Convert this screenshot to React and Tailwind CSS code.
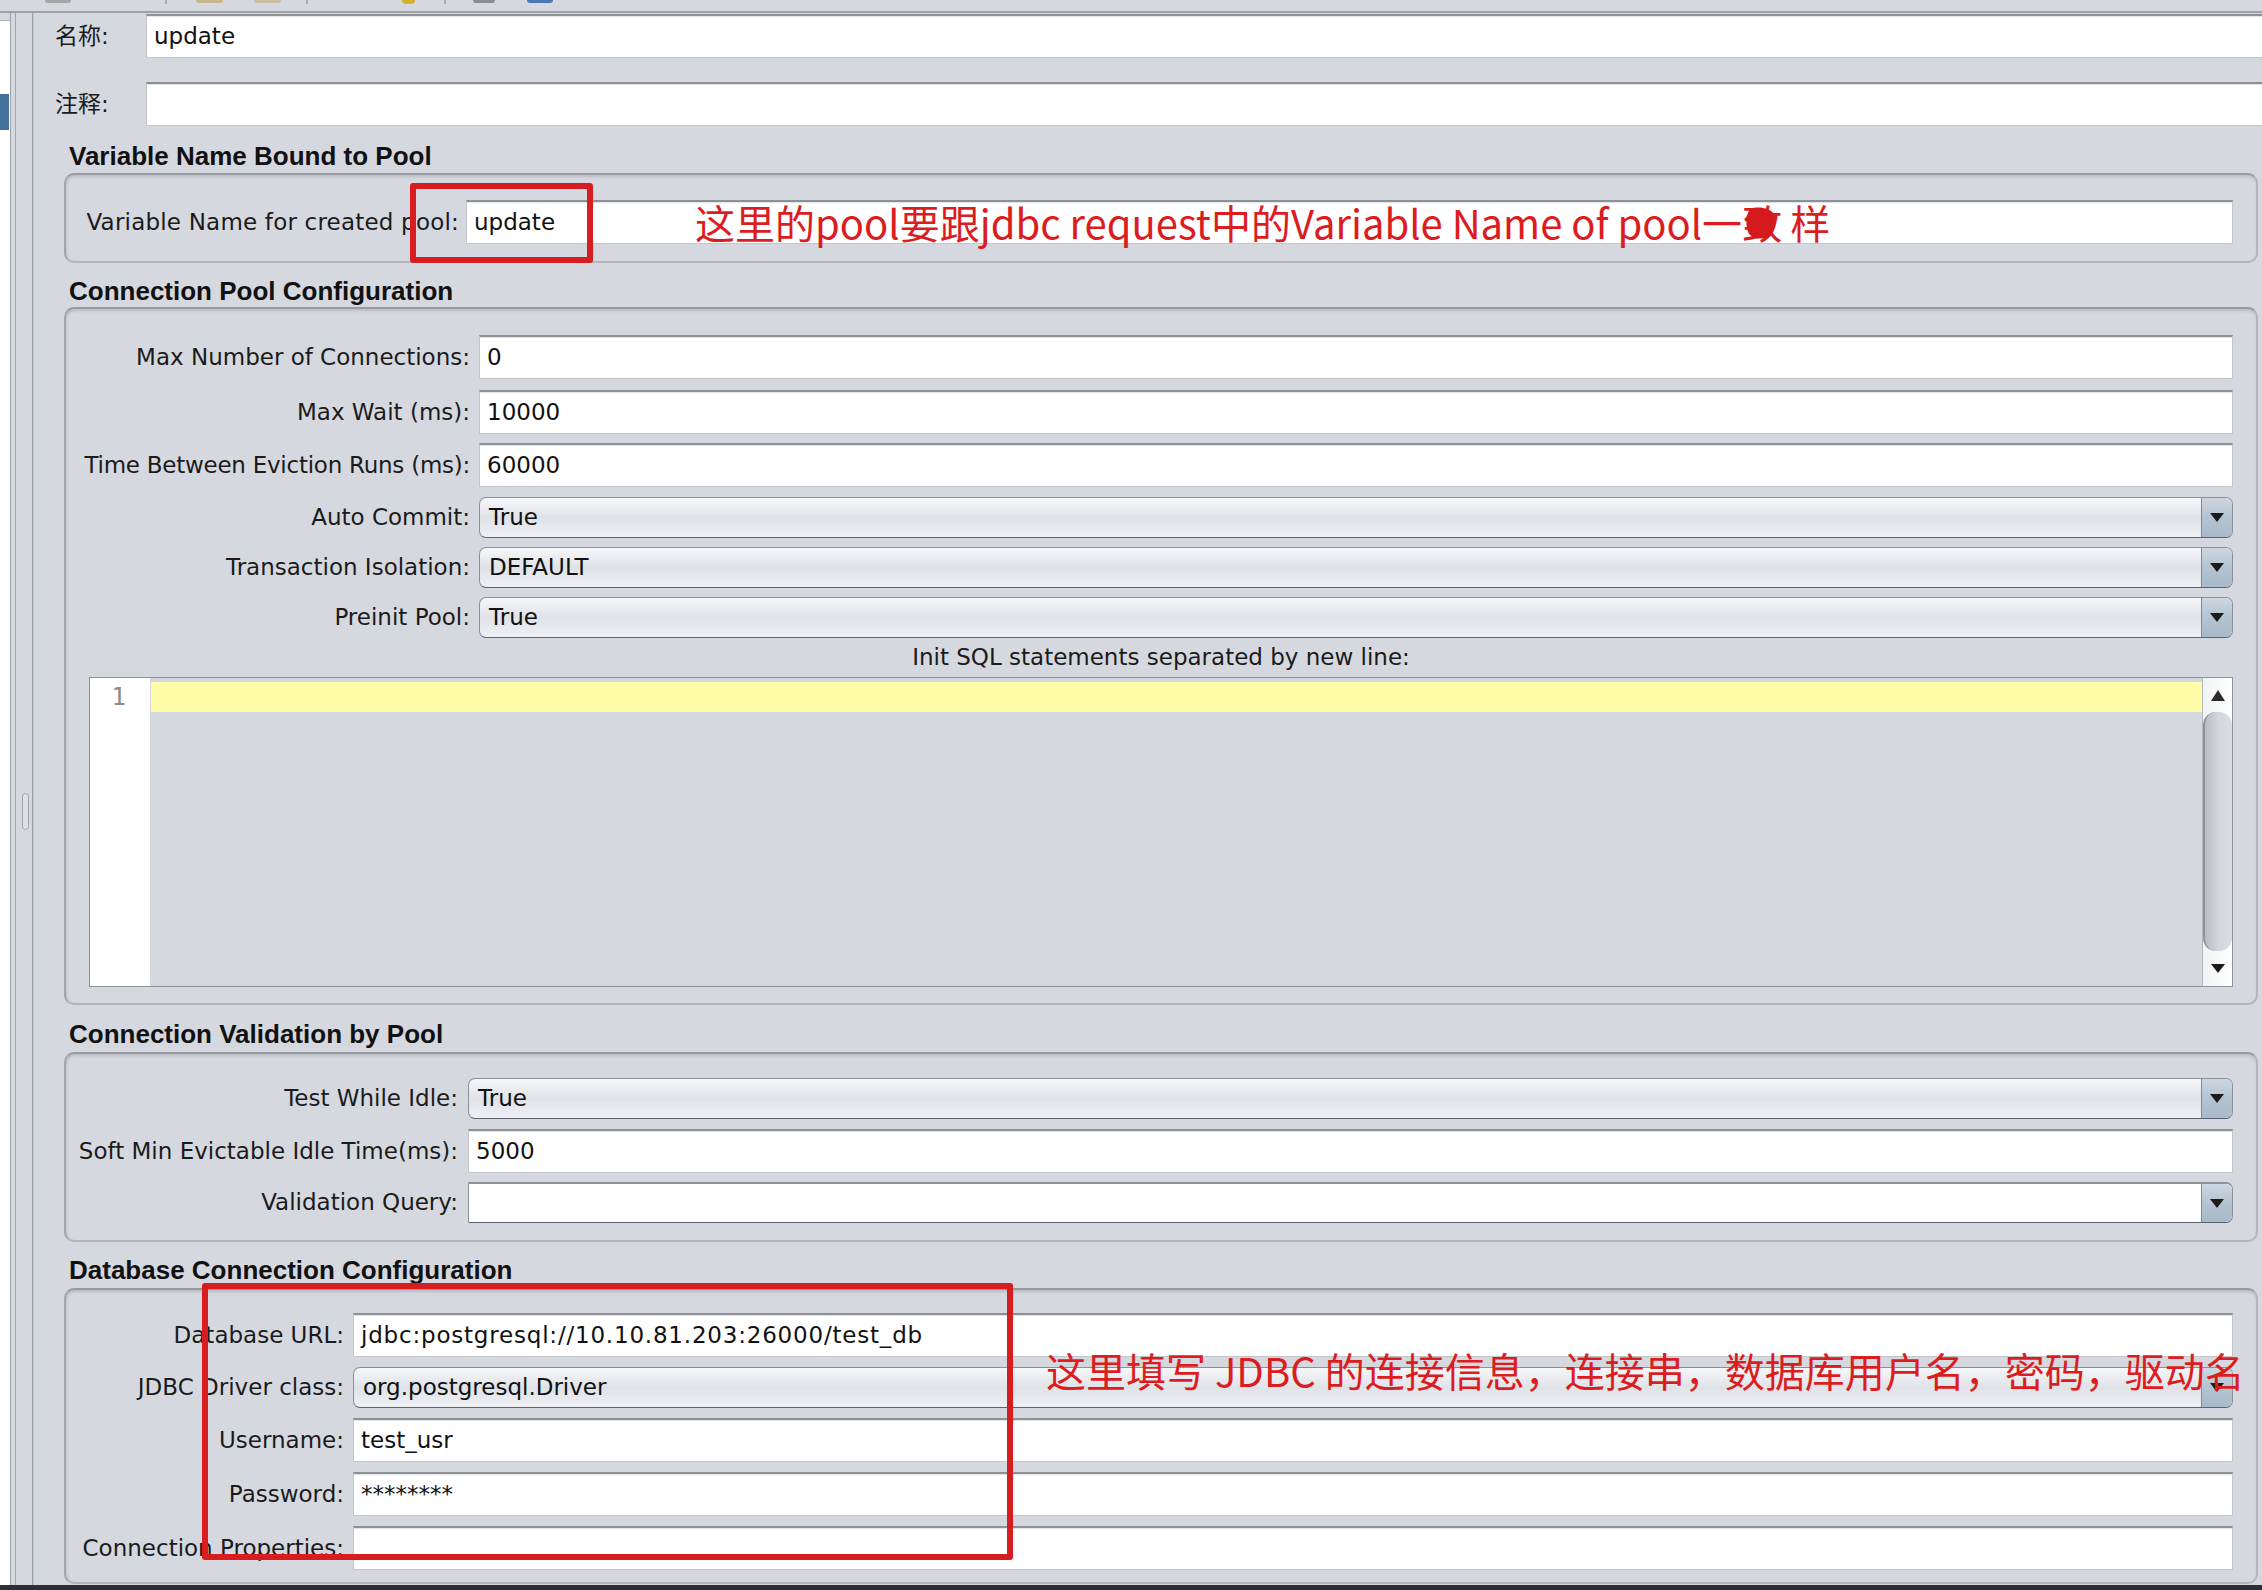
import React from 'react';

const SANS = "font-['DejaVu_Sans','Noto_Sans_CJK_SC',sans-serif]";
const BOLD = "font-['Liberation_Sans','Noto_Sans_CJK_SC',sans-serif]";
const CJK = "font-['Noto_Sans_CJK_SC','Liberation_Sans',sans-serif]";

const DownArrow = () => (
  <svg width="14" height="9" viewBox="0 0 14 9">
    <path d="M0 0h14L7 9z" fill="#1b1b1b" />
  </svg>
);

const UpArrow = () => (
  <svg width="14" height="11" viewBox="0 0 14 11">
    <path d="M7 0l7 11H0z" fill="#2b2b2b" />
  </svg>
);

// white text field with the etched top edge
const TextField = ({ value = '', className = '' }) => (
  <div
    className={`h-[44px] flex-1 min-w-0 bg-white border border-[#c3c5c9] border-t-2 border-t-[#8d9095] shadow-[inset_0_1px_0_#e3e4e6] flex items-center pl-[7px] text-[23px] text-[#111] whitespace-nowrap overflow-hidden ${className}`}
  >
    {value}
  </div>
);

// combo box, either the grey button style or the editable white one
const Combo = ({ value = '', editable = false }) => (
  <div
    className={`h-[41px] flex-1 min-w-0 flex overflow-hidden border border-[#8b8f97] border-b-[#5c6270] ${
      editable
        ? 'rounded-r-[7px] bg-white border-t-2 border-t-[#8d9095]'
        : 'rounded-[7px] bg-linear-to-b from-[#f6f7f9] via-[#dfe2e7] to-[#eef0f4]'
    }`}
  >
    <div className="flex-1 flex items-center pl-[9px] text-[23px] text-[#111] whitespace-nowrap">{value}</div>
    <div className="w-[31px] shrink-0 border-l border-[#7e8a99] bg-linear-to-b from-[#cdd7e1] via-[#b4c3d1] to-[#a8b9ca] flex items-center justify-center">
      <DownArrow />
    </div>
  </div>
);

const Row = ({ label, labelClass, className = '', children }) => (
  <div className={`flex items-center ${className}`}>
    <div className={`shrink-0 text-right text-[23px] text-[#1b1b1b] whitespace-nowrap ${labelClass}`}>{label}</div>
    {children}
  </div>
);

const Heading = ({ children, className = '' }) => (
  <div className={`ml-[35px] h-[30px] leading-[30px] text-[26px] font-bold text-[#111] ${BOLD} ${className}`}>{children}</div>
);

const GroupBox = ({ children, className = '' }) => (
  <div
    className={`ml-[30px] mr-[4px] rounded-[10px] border-2 border-[#b2b5bc] border-t-[#979aa1] border-l-[#a2a5ac] shadow-[inset_0_3px_3px_-1px_rgba(0,0,0,0.13),inset_3px_0_3px_-2px_rgba(0,0,0,0.09)] pr-[23px] ${className}`}
  >
    {children}
  </div>
);

const SqlEditor = () => (
  <div className="ml-[23px] h-[310px] border border-[#8e9196] flex">
    <div className="w-[61px] shrink-0 bg-white border-r border-[#d4d6da] flex justify-end pr-[24px] pt-[4px]">
      <span className="h-[30px] leading-[30px] text-[24px] text-[#8a8a8a] font-['DejaVu_Sans_Mono',monospace]">1</span>
    </div>
    <div className="flex-1 min-w-0 pt-[4px]">
      <div className="h-[30px] bg-[#fffca9]" />
    </div>
    <div className="w-[30px] shrink-0 flex flex-col border-l border-[#b4b7bc] bg-linear-to-r from-[#f2f3f5] to-[#ffffff]">
      <div className="h-[34px] flex items-center justify-center">
        <UpArrow />
      </div>
      <div className="flex-1 rounded-[13px] border-l-2 border-[#8f9298] bg-linear-to-r from-[#b9bcc2] via-[#d3d6db] to-[#dadde2]" />
      <div className="h-[35px] flex items-center justify-center">
        <DownArrow />
      </div>
    </div>
  </div>
);

const LeftStrip = () => (
  <div className="w-[34px] shrink-0 flex">
    <div className="w-[11px] border-r border-[#9ea2a8] flex flex-col pt-[7px]">
      <div className="flex-1 bg-white border-t border-[#b0b4ba]">
        <div className="mt-[73px] w-[9px] h-[36px] bg-[#45739e]" />
      </div>
    </div>
    <div className="w-[4px]" />
    <div className="w-[1px] bg-[#a3a7ad]" />
    <div className="w-[16px] pl-[6px]">
      <div className="mt-[780px] w-[7px] h-[37px] rounded-full border border-[#9fa3a9] bg-[#dde0e5]" />
    </div>
    <div className="w-[2px] border-l border-[#9a9ea5] bg-[#c9ccd2]" />
  </div>
);

const Toolbar = () => (
  <div className="h-[13px] shrink-0 border-b-2 border-[#9da1a7] flex items-start">
    <div className="ml-[45px] w-[26px] h-[3px] rounded-b bg-[#a5a5a5]" />
    <div className="ml-[94px] w-[2px] h-[4px] bg-[#a9a9a9]" />
    <div className="ml-[29px] w-[27px] h-[3px] rounded-b bg-[#c6b78e]" />
    <div className="ml-[31px] w-[27px] h-[3px] rounded-b bg-[#cbbfa2]" />
    <div className="ml-[25px] w-[2px] h-[4px] bg-[#a9a9a9]" />
    <div className="ml-[94px] w-[13px] h-[4px] rounded-b bg-[#d6b02e]" />
    <div className="ml-[29px] w-[2px] h-[4px] bg-[#a9a9a9]" />
    <div className="ml-[27px] w-[22px] h-[3px] rounded-b bg-[#8a8d92]" />
    <div className="ml-[32px] w-[26px] h-[3px] rounded-b bg-[#4e77b4]" />
  </div>
);

const App = () => {
  return (
    <div className={`relative w-[2262px] h-[1590px] overflow-hidden bg-[#d5d8df] flex flex-col ${SANS}`}>
      <Toolbar />

      <div className="flex-1 flex min-h-0">
        <LeftStrip />

        <div className="flex-1 min-w-0 flex flex-col overflow-hidden">
          {/* name / comment */}
          <Row label="名称:" labelClass="w-[112px] !text-left pl-[21px]" className="mt-[1px] -mr-[8px]">
            <TextField value="update" />
          </Row>
          <Row label="注释:" labelClass="w-[112px] !text-left pl-[21px]" className="mt-[24px] -mr-[8px]">
            <TextField />
          </Row>

          {/* Variable Name Bound to Pool */}
          <Heading className="mt-[15px]">Variable Name Bound to Pool</Heading>
          <GroupBox className="mt-[2px] pt-[25px] pb-[17px]">
            <Row label="Variable Name for created pool:" labelClass="w-[400px] pr-[7px] tracking-[0.2px]">
              <TextField value="update" />
            </Row>
          </GroupBox>

          {/* Connection Pool Configuration */}
          <Heading className="mt-[13px]">Connection Pool Configuration</Heading>
          <GroupBox className="mt-[1px] pt-[26px] pb-[16px]">
            <Row label="Max Number of Connections:" labelClass="w-[413px] pr-[9px]">
              <TextField value="0" />
            </Row>
            <Row label="Max Wait (ms):" labelClass="w-[413px] pr-[9px]" className="mt-[11px]">
              <TextField value="10000" />
            </Row>
            <Row
              label="Time Between Eviction Runs (ms):"
              labelClass="w-[413px] pr-[9px] tracking-[-0.25px]"
              className="mt-[9px]"
            >
              <TextField value="60000" />
            </Row>
            <Row label="Auto Commit:" labelClass="w-[413px] pr-[9px]" className="mt-[10px]">
              <Combo value="True" />
            </Row>
            <Row label="Transaction Isolation:" labelClass="w-[413px] pr-[9px]" className="mt-[9px]">
              <Combo value="DEFAULT" />
            </Row>
            <Row label="Preinit Pool:" labelClass="w-[413px] pr-[9px]" className="mt-[9px]">
              <Combo value="True" />
            </Row>
            <div className="ml-[23px] h-[39px] flex items-center justify-center text-[23px] text-[#1b1b1b]">
              Init SQL statements separated by new line:
            </div>
            <SqlEditor />
          </GroupBox>

          {/* Connection Validation by Pool */}
          <Heading className="mt-[14px]">Connection Validation by Pool</Heading>
          <GroupBox className="mt-[3px] pt-[24px] pb-[17px]">
            <Row label="Test While Idle:" labelClass="w-[402px] pr-[10px]">
              <Combo value="True" />
            </Row>
            <Row label="Soft Min Evictable Idle Time(ms):" labelClass="w-[402px] pr-[10px]" className="mt-[10px]">
              <TextField value="5000" />
            </Row>
            <Row label="Validation Query:" labelClass="w-[402px] pr-[10px]" className="mt-[9px]">
              <Combo editable />
            </Row>
          </GroupBox>

          {/* Database Connection Configuration */}
          <Heading className="mt-[13px]">Database Connection Configuration</Heading>
          <GroupBox className="mt-[3px] pt-[23px] pb-[12px]">
            <Row label="Database URL:" labelClass="w-[287px] pr-[9px]">
              <TextField value="jdbc:postgresql://10.10.81.203:26000/test_db" className="tracking-[0.8px]" />
            </Row>
            <Row label="JDBC Driver class:" labelClass="w-[287px] pr-[9px]" className="mt-[10px]">
              <Combo value="org.postgresql.Driver" />
            </Row>
            <Row label="Username:" labelClass="w-[287px] pr-[9px]" className="mt-[10px]">
              <TextField value="test_usr" />
            </Row>
            <Row label="Password:" labelClass="w-[287px] pr-[9px]" className="mt-[10px]">
              <TextField value="********" />
            </Row>
            <Row label="Connection Properties:" labelClass="w-[287px] pr-[9px]" className="mt-[10px]">
              <TextField />
            </Row>
          </GroupBox>
        </div>
      </div>

      <div className="h-[5px] shrink-0 bg-[#2c2f34]" />

      {/* red annotations drawn over the form */}
      <div className="absolute left-[410px] top-[183px] w-[183px] h-[80px] border-[6px] border-[#d71d20] rounded-[3px]" />
      <div
        className={`absolute left-[695px] top-[202px] h-[40px] leading-[40px] text-[40px] text-[#dc1d1f] whitespace-nowrap flex items-center ${CJK}`}
      >
        <span>这里的pool要跟jdbc request中的Variable Name of pool一</span>
        <span className="relative">
          致
          <svg className="absolute left-[2px] top-[4px]" width="34" height="34" viewBox="0 0 34 34">
            <path d="M6 3 C14 0 26 2 30 8 C33 15 31 24 27 30 C20 34 10 33 5 28 C1 21 2 9 6 3z" fill="#d41a1c" />
          </svg>
        </span>
        <span className="ml-[8px]">样</span>
      </div>

      <div className="absolute left-[202px] top-[1283px] w-[811px] h-[277px] border-[6px] border-[#d71d20] rounded-[3px]" />
      <div
        className={`absolute left-[1046px] top-[1350px] h-[40px] leading-[40px] text-[40px] text-[#dc1d1f] whitespace-nowrap ${CJK}`}
      >
        这里填写 JDBC 的连接信息，连接串，数据库用户名，密码，驱动名
      </div>
    </div>
  );
};

export default App;
